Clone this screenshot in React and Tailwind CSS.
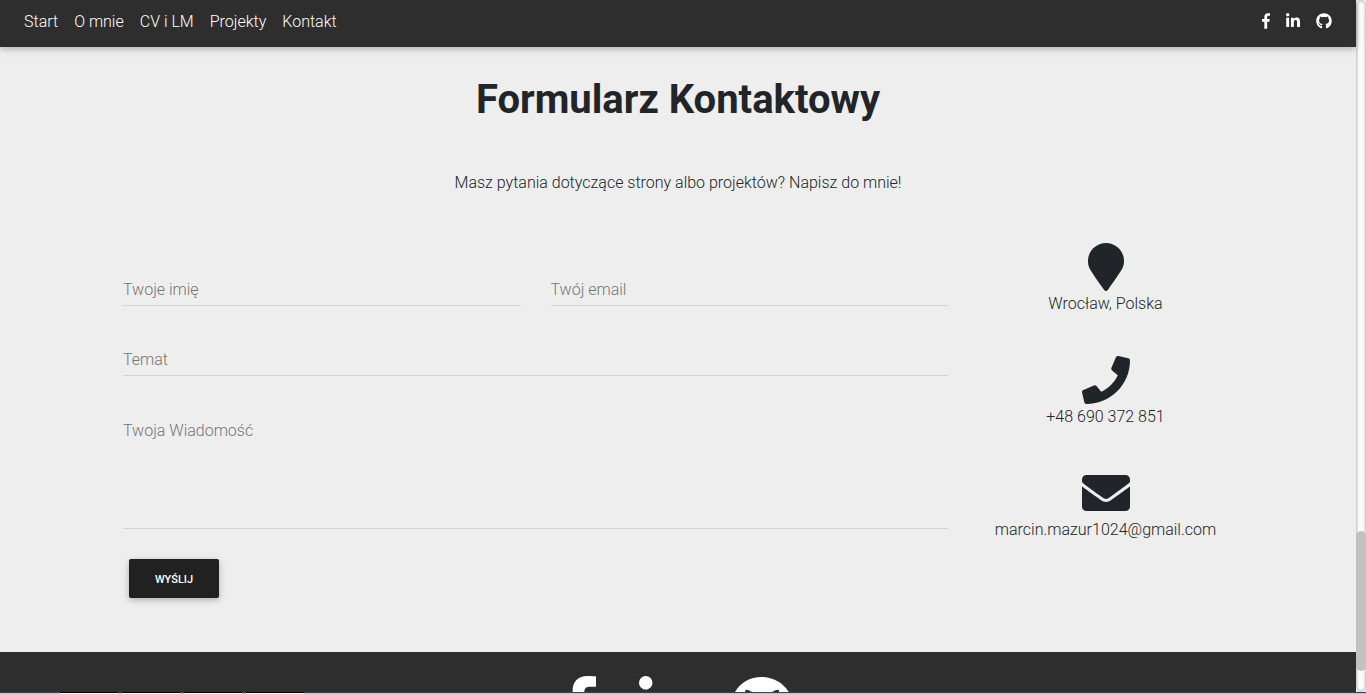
import { FaLinkedinIn, FaGithub, FaMapMarker, FaPhone, FaEnvelope } from 'react-icons/fa';

const links = ['Start', 'O mnie', 'CV i LM', 'Projekty', 'Kontakt'];
const contacts = [
  { icon: FaMapMarker, text: 'Wrocław, Polska' },
  { icon: FaPhone, text: '+48 690 372 851' },
  { icon: FaEnvelope, text: 'marcin.mazur1024@gmail.com' },
];
const field =
  'block w-full border-b border-[#ced4da] bg-transparent px-0 text-base placeholder:text-[#757575] placeholder:opacity-100 outline-none';

function FacebookF({ className }) {
  return (
    <svg viewBox="0 0 264 512" preserveAspectRatio="xMinYMid meet" fill="currentColor" className={className}>
      <path d="M76.7 512V283H0v-91h76.7v-71.7C76.7 42.4 124.3 0 193.8 0c33.3 0 61.9 2.5 70.2 3.6V85h-48.2c-37.8 0-45.1 18-45.1 44.3V192H256l-11.7 91h-73.6v229" />
    </svg>
  );
}

function Nav() {
  return (
    <nav className="relative z-10 flex h-[47px] shrink-0 items-start justify-between bg-[#2e2e2e] px-6 pt-[9px] text-white shadow-[0_2px_5px_0_rgba(0,0,0,0.16),0_2px_10px_0_rgba(0,0,0,0.12)]">
      <ul className="flex gap-4 leading-[26px]">
        {links.map((l) => (
          <li key={l}>
            <a href="#">{l}</a>
          </li>
        ))}
      </ul>
      <div className="flex h-6 items-center gap-4">
        <a href="#" aria-label="Facebook"><FacebookF className="h-4 w-2" /></a>
        <a href="#" aria-label="LinkedIn"><FaLinkedinIn className="h-4 w-[14px]" /></a>
        <a href="#" aria-label="GitHub"><FaGithub className="h-4 w-4" /></a>
      </div>
    </nav>
  );
}

function ContactForm() {
  return (
    <form className="w-3/4 px-[15px] pt-[31px]" onSubmit={(e) => e.preventDefault()}>
      <div className="flex gap-[30px]">
        <input aria-label="Twoje imię" placeholder="Twoje imię" className={field + ' h-[38px] min-w-0 flex-1 pt-[6px]'} />
        <input aria-label="Twój email" type="email" placeholder="Twój email" className={field + ' h-[38px] min-w-0 flex-1 pt-[6px]'} />
      </div>
      <input aria-label="Temat" placeholder="Temat" className={field + ' mt-8 h-[38px] pt-[6px]'} />
      <textarea aria-label="Twoja Wiadomość" placeholder="Twoja Wiadomość" className={field + ' mt-8 h-[121px] resize-none pt-[11px] leading-6'} />
      <button
        type="submit"
        className="mt-[30px] ml-[6px] h-[39px] w-[90px] rounded-[2px] bg-[#212121] pt-[3px] text-[11px] font-medium text-white uppercase shadow-[0_2px_5px_0_rgba(0,0,0,0.16),0_2px_10px_0_rgba(0,0,0,0.12)]"
      >
        Wyślij
      </button>
    </form>
  );
}

function Footer() {
  return (
    <footer className="min-h-0 flex-1 overflow-hidden bg-[#2e2e2e] pt-6 text-white">
      <div className="flex justify-center gap-9">
        <a href="#" aria-label="Facebook"><FacebookF className="h-16 w-10" /></a>
        <a href="#" aria-label="LinkedIn"><FaLinkedinIn className="h-16 w-14" /></a>
        <a href="#" aria-label="GitHub"><FaGithub className="h-16 w-[62px]" /></a>
      </div>
    </footer>
  );
}

export default function App() {
  return (
    <div className="flex h-screen flex-col overflow-hidden bg-[#eeeeee] font-['Roboto',sans-serif] font-light text-[#212529]">
      <div className="flex min-h-0 flex-1">
        <div className="flex min-w-0 flex-1 flex-col">
          <Nav />
          <main className="mx-auto w-full max-w-[1140px] shrink-0 pb-[54px]">
            <h1 className="pt-[29px] text-center text-[40px] leading-[48px] font-bold">Formularz Kontaktowy</h1>
            <p className="mt-[47px] text-center leading-6">Masz pytania dotyczące strony albo projektów? Napisz do mnie!</p>
            <div className="mt-[42px] flex">
              <ContactForm />
              <ul className="w-1/4 pt-[6px] text-center">
                {contacts.map(({ icon: Icon, text }) => (
                  <li key={text} className="mb-[39px] flex flex-col items-center last:mb-0">
                    <Icon size={48} />
                    <span className="leading-[26px]">{text}</span>
                  </li>
                ))}
              </ul>
            </div>
          </main>
          <Footer />
        </div>
        <div className="flex w-[10px] flex-col justify-end rounded-[5px] border border-[#cfcfcf] bg-white pb-5 shadow-[inset_0_0_3px_rgba(0,0,0,0.3)]">
          <div className="-mx-px h-[140px] rounded-[5px] bg-[#c1c1c1]" />
        </div>
      </div>
      <div className="h-[2px] shrink-0 border-t border-[#3b4555] bg-[#b5c7de]">
        <div className="ml-[60px] flex gap-1">
          {[0, 1, 2, 3].map((i) => (
            <div key={i} className="-mt-px h-[2px] w-[58px] border-t border-black bg-white" />
          ))}
        </div>
      </div>
    </div>
  );
}
